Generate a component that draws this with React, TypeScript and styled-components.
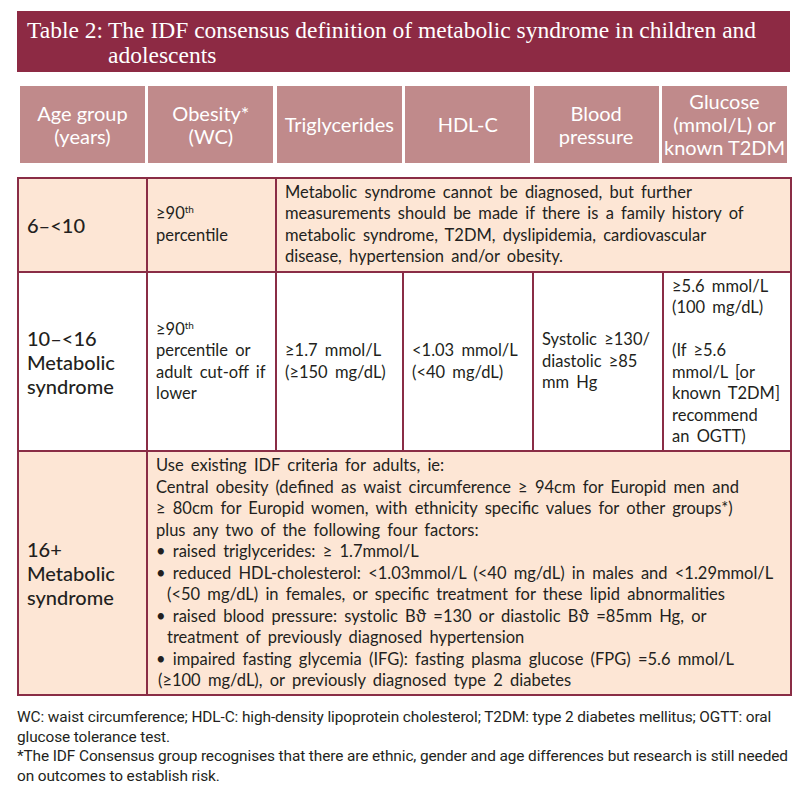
import React from "react";
import styled, { createGlobalStyle } from "styled-components";

const GlobalStyle = createGlobalStyle`
  html, body { margin: 0; padding: 0; background: #ffffff; }
`;

const MAROON = "#8d2a44";
const BORDER = "#8a2d46";
const HEAD = "#c08a8b";
const PEACH = "#fde6d5";
const INK = "#231f20";

const Page = styled.div`
  width: 808px;
  height: 785px;
  box-sizing: border-box;
  padding: 11px 18px 0 17px;
  background: #fff;
  overflow: hidden;
`;

const TitleBar = styled.div`
  display: flex;
  height: 61px;
  box-sizing: border-box;
  padding: 7px 10px 0 10px;
  background: ${MAROON};
  color: #fff;
  font-family: "Liberation Serif", serif;
  font-size: 23.5px;
  line-height: 24.5px;
`;

const TitleLabel = styled.span`
  flex: none;
  width: 81px;
  white-space: nowrap;
`;

const TitleText = styled.span`
  flex: 1;
  white-space: nowrap;
`;

const HeaderGrid = styled.div`
  display: grid;
  grid-template-columns: repeat(6, 1fr);
  gap: 3.5px;
  width: 767px;
  height: 77px;
  margin: 14px 0 0 3px;
`;

const HeaderCell = styled.div`
  display: flex;
  align-items: center;
  justify-content: center;
  text-align: center;
  background: ${HEAD};
  color: #fff;
  font-family: Lato, "Liberation Sans", sans-serif;
  font-size: 20px;
  line-height: 23px;
`;

const Table = styled.table`
  width: 773px;
  margin-top: 14px;
  border-collapse: collapse;
  table-layout: fixed;
  border: 2px solid ${BORDER};
`;

const Cell = styled.td<{ $bg: string; $age?: boolean }>`
  border: 2px solid ${BORDER};
  background: ${(p) => p.$bg};
  padding: 3px 8px;
  vertical-align: middle;
  color: ${INK};
  font-family: Lato, "Liberation Sans", sans-serif;
  font-size: ${(p) => (p.$age ? "20px" : "16.5px")};
  font-weight: ${(p) => (p.$age ? 500 : 400)};
  line-height: ${(p) => (p.$age ? "24px" : "21.45px")};
  word-spacing: ${(p) => (p.$age ? "0" : "3px")};
  white-space: nowrap;
`;

const Sup = styled.sup`
  font-size: 10px;
  line-height: 0;
  vertical-align: 6px;
`;

const Line = styled.div<{ $indent?: number }>`
  padding-left: ${(p) => p.$indent ?? 0}px;
`;

const Gap = styled.div`
  height: 21.45px;
`;

const Notes = styled.div`
  margin-top: 12px;
  color: ${INK};
  font-family: Roboto, "Liberation Sans", sans-serif;
  font-size: 15.4px;
  letter-spacing: -0.1px;
  line-height: 19.4px;
  white-space: nowrap;
`;

const headers: React.ReactNode[] = [
  <>Age group<br />(years)</>,
  <>Obesity*<br />(WC)</>,
  "Triglycerides",
  "HDL-C",
  <>Blood<br />pressure</>,
  <>Glucose<br />(mmol/L) or<br />known T2DM</>,
];

const Lines = ({ lines }: { lines: (string | [string, number])[] }) => (
  <>
    {lines.map((l, i) =>
      typeof l === "string" ? <Line key={i}>{l}</Line> : <Line key={i} $indent={l[1]}>{l[0]}</Line>
    )}
  </>
);

export default function App() {
  return (
    <Page>
      <GlobalStyle />
      <TitleBar>
        <TitleLabel>Table 2:</TitleLabel>
        <TitleText>
          The IDF consensus definition of metabolic syndrome in children and
          <br />
          adolescents
        </TitleText>
      </TitleBar>

      <HeaderGrid>
        {headers.map((h, i) => (
          <HeaderCell key={i}>{h}</HeaderCell>
        ))}
      </HeaderGrid>

      <Table>
        <colgroup>
          <col style={{ width: 129 }} />
          <col style={{ width: 129 }} />
          <col style={{ width: 127 }} />
          <col style={{ width: 130 }} />
          <col style={{ width: 130 }} />
          <col style={{ width: 128 }} />
        </colgroup>
        <tbody>
          <tr>
            <Cell $bg={PEACH} $age>6–&lt;10</Cell>
            <Cell $bg={PEACH}>
              <Line>≥90<Sup>th</Sup></Line>
              <Line>percentile</Line>
            </Cell>
            <Cell $bg={PEACH} colSpan={4}>
              <Lines
                lines={[
                  "Metabolic syndrome cannot be diagnosed, but further",
                  "measurements should be made if there is a family history of",
                  "metabolic syndrome, T2DM, dyslipidemia, cardiovascular",
                  "disease, hypertension and/or obesity.",
                ]}
              />
            </Cell>
          </tr>
          <tr>
            <Cell $bg="#ffffff" $age>
              <Lines lines={["10–<16", "Metabolic", "syndrome"]} />
            </Cell>
            <Cell $bg="#ffffff">
              <Line>≥90<Sup>th</Sup></Line>
              <Lines lines={["percentile or", "adult cut-off if", "lower"]} />
            </Cell>
            <Cell $bg="#ffffff">
              <Lines lines={["≥1.7 mmol/L", "(≥150 mg/dL)"]} />
            </Cell>
            <Cell $bg="#ffffff">
              <Lines lines={["<1.03 mmol/L", "(<40 mg/dL)"]} />
            </Cell>
            <Cell $bg="#ffffff">
              <Lines lines={["Systolic ≥130/", "diastolic ≥85", "mm Hg"]} />
            </Cell>
            <Cell $bg="#ffffff">
              <Lines lines={["≥5.6 mmol/L", "(100 mg/dL)"]} />
              <Gap />
              <Lines lines={["(If ≥5.6", "mmol/L [or", "known T2DM]", "recommend", "an OGTT)"]} />
            </Cell>
          </tr>
          <tr>
            <Cell $bg={PEACH} $age>
              <Lines lines={["16+", "Metabolic", "syndrome"]} />
            </Cell>
            <Cell $bg={PEACH} colSpan={5}>
              <Lines
                lines={[
                  "Use existing IDF criteria for adults, ie:",
                  "Central obesity (defined as waist circumference ≥ 94cm for Europid men and",
                  "≥ 80cm for Europid women, with ethnicity specific values for other groups*)",
                  "plus any two of the following four factors:",
                  "• raised triglycerides: ≥ 1.7mmol/L",
                  "• reduced HDL-cholesterol: <1.03mmol/L (<40 mg/dL) in males and <1.29mmol/L",
                  ["(<50 mg/dL) in females, or specific treatment for these lipid abnormalities", 11],
                  "• raised blood pressure: systolic Bϑ =130 or diastolic Bϑ =85mm Hg, or",
                  ["treatment of previously diagnosed hypertension", 11],
                  "• impaired fasting glycemia (IFG): fasting plasma glucose (FPG) =5.6 mmol/L",
                  ["(≥100 mg/dL), or previously diagnosed type 2 diabetes", 2],
                ]}
              />
            </Cell>
          </tr>
        </tbody>
      </Table>

      <Notes>
        WC: waist circumference; HDL-C: high-density lipoprotein cholesterol; T2DM: type 2 diabetes mellitus; OGTT: oral
        <br />
        glucose tolerance test.
        <br />
        *The IDF Consensus group recognises that there are ethnic, gender and age differences but research is still needed
        <br />
        on outcomes to establish risk.
      </Notes>
    </Page>
  );
}
